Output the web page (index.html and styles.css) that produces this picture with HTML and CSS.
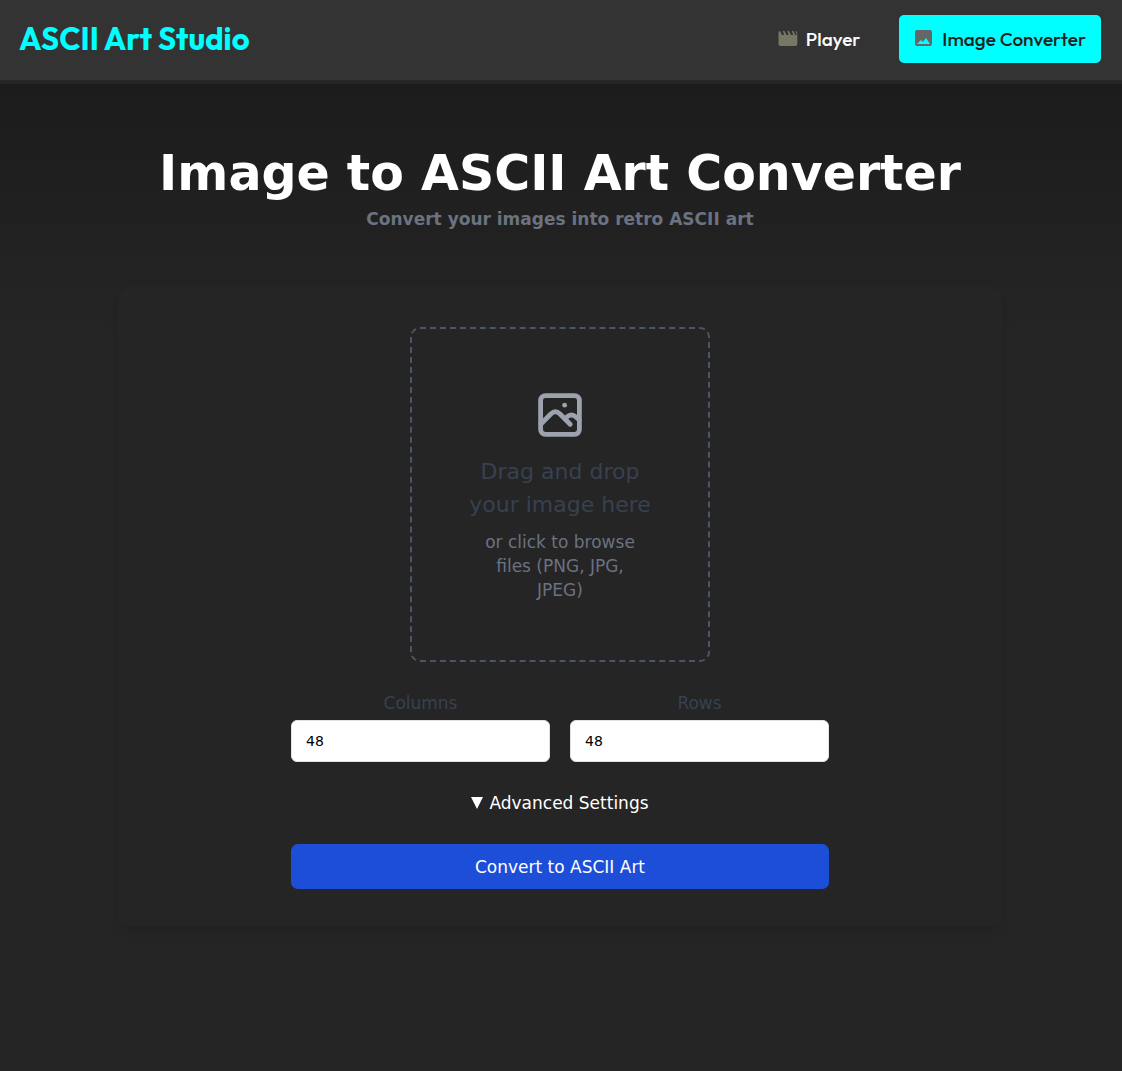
FILE: index.html
```html
<!DOCTYPE html>
<html lang="en">
<head>
<meta charset="utf-8">
<meta name="viewport" content="width=device-width, initial-scale=1">
<title>ASCII Art Studio</title>
<link rel="stylesheet" href="styles.css">
</head>
<body>
<header class="topbar">
  <a class="brand" href="#">ASCII Art Studio</a>
  <nav class="nav">
    <a class="nav-link" href="#player">
      <svg class="nav-icon clapper" viewBox="0 0 20 20" aria-hidden="true"><path d="M2 2l2 4h2.200L4.800 2H6.500l2 4h2.200L9.300 2H11l2 4h2.200L13.800 2h1.700l1.800 4h1.500L17.500 2q1.800 0 1.800 2v11q0 2-2 2H2.500q-2 0-2-2V4q0-2 1.500-2z"/></svg>
      <span>Player</span>
    </a>
    <a class="nav-link active" href="#converter" aria-current="page">
      <svg class="nav-icon photo" viewBox="0 0 20 20" aria-hidden="true"><path fill-rule="evenodd" d="M3 1h13q2 0 2 2v12q0 2-2 2H3q-2 0-2-2V3q0-2 2-2zM3 15h13l-4-6-3 4-2-2z"/></svg>
      <span>Image Converter</span>
    </a>
  </nav>
</header>
<main class="page">
  <h1 class="title">Image to ASCII Art Converter</h1>
  <p class="subtitle">Convert your images into retro ASCII art</p>
  <form class="card">
    <button class="dropzone" type="button">
      <svg class="drop-icon" viewBox="0 0 24 24" fill="none" stroke="currentColor" stroke-width="2.4" stroke-linecap="round" stroke-linejoin="round" aria-hidden="true"><rect x="2.3" y="2.3" width="19.4" height="19.4" rx="2.4"/><path d="M2.6 16.4l4.8-4.9q2.3-2.2 4.6 0l5.100 5.100M14.500 14l.9-1q2.300-2.100 4.600 0l1.600 1.500"/><path d="M14.300 7.100h.01"/></svg>
      <span class="drop-title">Drag and drop your image here</span>
      <span class="drop-hint">or click to browse files (PNG, JPG, JPEG)</span>
    </button>
    <div class="fields">
      <div class="field">
        <label for="columns">Columns</label>
        <input id="columns" type="text" inputmode="numeric" value="48">
      </div>
      <div class="field">
        <label for="rows">Rows</label>
        <input id="rows" type="text" inputmode="numeric" value="48">
      </div>
    </div>
    <button class="advanced" type="button" aria-expanded="false"><svg class="caret" viewBox="0 0 12 12" aria-hidden="true"><path d="M0 0h12L6 12z"/></svg>Advanced Settings</button>
    <button class="convert" type="submit">Convert to ASCII Art</button>
  </form>
</main>
</body>
</html>
```
FILE: styles.css
```css
* { box-sizing: border-box; }

body {
  margin: 0;
  min-height: 100vh;
  background: #252525;
  color: #fff;
  font-family: Verdana, "DejaVu Sans", sans-serif;
  font-size: 17px;
  line-height: 24px;
}

button, input { font: inherit; }

.topbar {
  display: flex;
  align-items: center;
  justify-content: space-between;
  height: 84px;
  padding: 0 21px 2px 19px;
  background: #333;
  border-bottom: 4px solid #252525;
  font-family: Outfit, Lato, sans-serif;
}

.brand {
  color: #0ff;
  font-size: 31px;
  font-weight: 700;
  line-height: 40px;
  text-decoration: none;
}

.nav { display: flex; gap: 24px; }

.nav-link {
  display: flex;
  align-items: center;
  gap: 8px;
  height: 48px;
  padding: 0 15px;
  border-radius: 5px;
  color: #fff;
  font-size: 19px;
  font-weight: 500;
  text-decoration: none;
}

.nav-link.active {
  background: #0ff;
  color: #222;
}

.nav-icon { width: 20px; height: 20px; }
.clapper { fill: #777763; }
.photo { fill: #666; }

.page {
  display: flex;
  flex-direction: column;
  align-items: center;
  padding: 57px 22px 144px 20px;
  background: linear-gradient(#1c1c1c, #252525 260px);
}

.title {
  margin: 0;
  font-size: 49px;
  line-height: 66px;
  text-align: center;
}

.subtitle {
  margin: 0;
  color: #6b7280;
  font-weight: 700;
  text-align: center;
}

.card {
  display: flex;
  flex-direction: column;
  align-items: center;
  width: 100%;
  max-width: 884px;
  margin-top: 56px;
  padding: 40px 20px 37px;
  border-radius: 12px;
  background: #252525;
  box-shadow: 0 10px 15px -3px rgba(0, 0, 0, .06), 0 4px 6px -2px rgba(0, 0, 0, .05);
}

.dropzone {
  display: flex;
  flex-direction: column;
  align-items: center;
  width: 100%;
  max-width: 300px;
  padding: 62px 50px 58px;
  border: 2px dashed #4a5568;
  border-radius: 10px;
  background: none;
  cursor: pointer;
}

.drop-icon { width: 48px; height: 48px; color: #9ca3af; }

.drop-title {
  margin-top: 16px;
  color: #374151;
  font-size: 22px;
  line-height: 33px;
}

.drop-hint {
  max-width: 170px;
  margin-top: 9px;
  color: #6b7280;
}

.fields {
  display: grid;
  grid-template-columns: 1fr 1fr;
  gap: 20px;
  width: 100%;
  max-width: 538px;
  margin-top: 29px;
}

.field {
  display: flex;
  flex-direction: column;
  gap: 5px;
  text-align: center;
}

.field label { color: #374151; }

.field input {
  width: 100%;
  height: 42px;
  padding: 0 14px;
  border: 1px solid #e2e2e2;
  border-radius: 6px;
  background: #fff;
  color: #000;
  font-size: 14px;
}

.advanced {
  display: flex;
  align-items: center;
  gap: 6px;
  margin-top: 29px;
  padding: 0;
  border: 0;
  background: none;
  color: #fff;
}

.caret { width: 12px; height: 12px; fill: currentColor; }

.convert {
  width: 100%;
  max-width: 538px;
  height: 45px;
  margin-top: 29px;
  border: 0;
  border-radius: 7px;
  background: #1d4ed8;
  color: #fff;
}
```
